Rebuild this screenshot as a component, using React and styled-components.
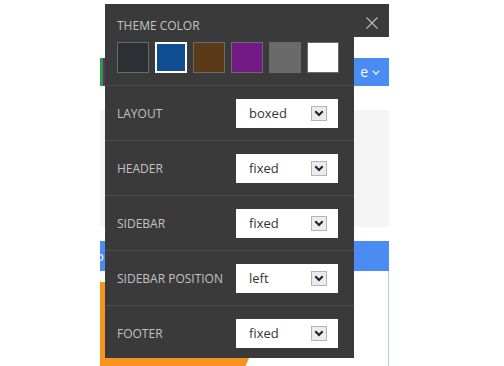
import styled, { createGlobalStyle } from "styled-components";

const GlobalStyle = createGlobalStyle`
  html, body {
    margin: 0;
    padding: 0;
    background: #ffffff;
    font-family: "Open Sans", "Liberation Sans", sans-serif;
  }
`;

const swatches = ["#2c2f34", "#0f4d92", "#5b3a17", "#721b86", "#6a6a6a", "#ffffff"];
const rows = [
  { label: "LAYOUT", value: "boxed" },
  { label: "HEADER", value: "fixed" },
  { label: "SIDEBAR", value: "fixed" },
  { label: "SIDEBAR POSITION", value: "left" },
  { label: "FOOTER", value: "fixed" },
];

function App() {
  return (
    <>
      <GlobalStyle />
      <Page>
        <Backdrop>
          <TopSpace />
          <NavBar>
            <NavAccent />
            <NavFill>
              <NavText>e</NavText>
              <NavChevron viewBox="0 0 10 6">
                <path d="M1 1l4 4 4-4" />
              </NavChevron>
            </NavFill>
          </NavBar>
          <GreyBox />
          <BlueBar>o</BlueBar>
          <CardArea>
            <OrangeCard />
          </CardArea>
        </Backdrop>

        <Panel>
          <PanelHeader>
            <PanelTitle>THEME COLOR</PanelTitle>
            <CloseIcon viewBox="0 0 12 12">
              <path d="M0.5 0.5l11 11M11.5 0.5l-11 11" />
            </CloseIcon>
          </PanelHeader>
          <PanelBody>
            <SwatchRow>
              {swatches.map((c, i) => (
                <Swatch key={c} $color={c} $active={i === 1} />
              ))}
            </SwatchRow>
            {rows.map((r) => (
              <OptionRow key={r.label}>
                <OptionLabel>{r.label}</OptionLabel>
                <SelectBox>
                  <SelectText>{r.value}</SelectText>
                  <SelectArrow>
                    <svg width="10" height="7" viewBox="0 0 10 7">
                      <path d="M1.3 1.3l3.7 3.7 3.7-3.7" fill="none" stroke="#1a1f33" strokeWidth="2" />
                    </svg>
                  </SelectArrow>
                </SelectBox>
              </OptionRow>
            ))}
          </PanelBody>
        </Panel>
      </Page>
    </>
  );
}

export default App;

const Page = styled.div`
  position: relative;
  width: 504px;
  height: 366px;
  overflow: hidden;
  background: #ffffff;
`;

const Backdrop = styled.div`
  display: flex;
  flex-direction: column;
  width: 289px;
  height: 366px;
  margin-left: 100px;
`;

const TopSpace = styled.div`
  height: 58px;
`;

const NavBar = styled.div`
  display: flex;
  height: 28px;
`;

const NavAccent = styled.div`
  width: 3px;
  background: #22a33a;
  border-right: 2px solid #6b2a7a;
`;

const NavFill = styled.div`
  flex: 1;
  display: flex;
  align-items: center;
  justify-content: flex-end;
  gap: 4px;
  padding-right: 9px;
  background: #4a8cf2;
`;

const NavText = styled.span`
  color: #ffffff;
  font-size: 14px;
  line-height: 1;
`;

const NavChevron = styled.svg`
  width: 8px;
  height: 5px;
  fill: none;
  stroke: #ffffff;
  stroke-width: 1.6;
`;

const GreyBox = styled.div`
  height: 117px;
  margin-top: 24px;
  background: #f5f5f5;
`;

const BlueBar = styled.div`
  height: 30px;
  margin-top: 14px;
  display: flex;
  align-items: center;
  background: #4a8cf2;
  color: #ffffff;
  font-size: 13px;
  text-indent: -4px;
`;

const CardArea = styled.div`
  flex: 1;
  padding-top: 11px;
  border-right: 1px solid #b9cdf7;
`;

const OrangeCard = styled.div`
  width: 150px;
  height: 100%;
  background: #f7931e;
  clip-path: polygon(0 0, 100% 0, 100% 88%, 97% 100%, 0 100%);
`;

const Panel = styled.div`
  position: absolute;
  top: 4px;
  left: 105px;
  width: 284px;
`;

const PanelHeader = styled.div`
  position: relative;
  height: 33px;
  padding: 14px 12px 0;
  box-sizing: border-box;
  background: #3a3a3a;
`;

const PanelTitle = styled.div`
  color: #c4c4c4;
  font-size: 12px;
  line-height: 16px;
`;

const CloseIcon = styled.svg`
  position: absolute;
  top: 13px;
  right: 11px;
  width: 12px;
  height: 12px;
  fill: none;
  stroke: #bdbdbd;
  stroke-width: 1.1;
`;

const PanelBody = styled.div`
  width: 249px;
  height: 321px;
  background: #3a3a3a;
`;

const SwatchRow = styled.div`
  display: flex;
  gap: 6px;
  padding: 5px 12px 12px;
`;

const Swatch = styled.div`
  width: 32px;
  height: 31px;
  box-sizing: border-box;
  background: ${(p) => p.$color};
  border: ${(p) => (p.$active ? "2px solid #ffffff" : "1px solid #6a6a6a")};
`;

const OptionRow = styled.div`
  display: flex;
  align-items: center;
  justify-content: space-between;
  height: 55px;
  box-sizing: border-box;
  padding: 0 16px 0 12px;
  border-top: 1px solid #4c4c4c;
`;

const OptionLabel = styled.span`
  color: #c2c2c2;
  font-size: 12px;
`;

const SelectBox = styled.div`
  display: flex;
  align-items: center;
  justify-content: space-between;
  width: 102px;
  height: 29px;
  box-sizing: border-box;
  padding: 0 11px 0 13px;
  background: #ffffff;
`;

const SelectText = styled.span`
  color: #333333;
  font-size: 13px;
`;

const SelectArrow = styled.span`
  display: flex;
  align-items: center;
  justify-content: center;
  width: 16px;
  height: 15px;
  box-sizing: border-box;
  background: #ececec;
  border: 1px solid #b4b4b4;
`;
